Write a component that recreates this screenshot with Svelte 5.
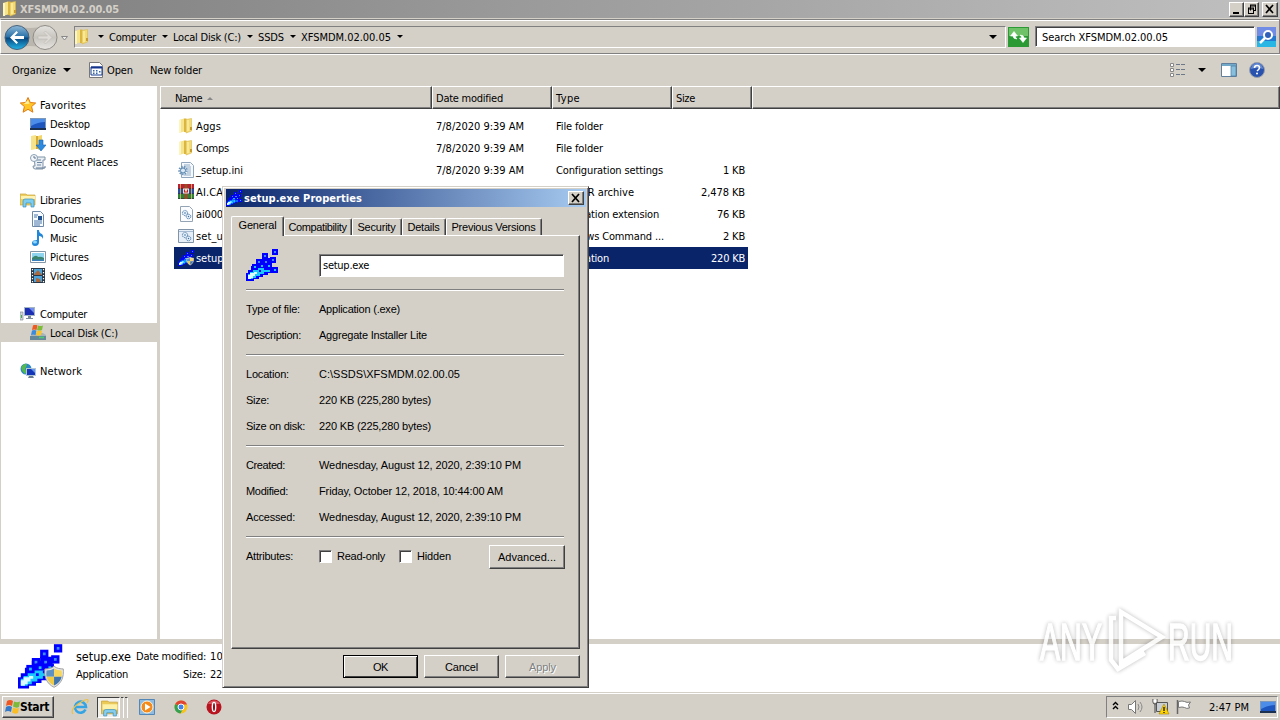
<script lang="ts">
  const crumbs = [
    { label: 'Computer', w: 47 },
    { label: 'Local Disk (C:)', w: 68 },
    { label: 'SSDS', w: 26 },
    { label: 'XFSMDM.02.00.05', w: 90 },
  ];

  const places = [
    { label: 'Favorites', w: 46, icon: 'star', root: true },
    { label: 'Desktop', w: 40, icon: 'desktop' },
    { label: 'Downloads', w: 53, icon: 'downloads' },
    { label: 'Recent Places', w: 68, icon: 'recent' },
    null,
    { label: 'Libraries', w: 41, icon: 'libraries', root: true },
    { label: 'Documents', w: 54, icon: 'document' },
    { label: 'Music', w: 27, icon: 'music' },
    { label: 'Pictures', w: 39, icon: 'pictures' },
    { label: 'Videos', w: 32, icon: 'videos' },
    null,
    { label: 'Computer', w: 47, icon: 'computer', root: true },
    { label: 'Local Disk (C:)', w: 68, icon: 'disk', current: true },
    null,
    { label: 'Network', w: 42, icon: 'network', root: true },
  ];

  const date = '7/8/2020 9:39 AM';
  const files = [
    { name: 'Aggs', nw: 25, icon: 'folder', type: 'File folder', tw: 47, size: '', sw: 0 },
    { name: 'Comps', nw: 33, icon: 'folder', type: 'File folder', tw: 47, size: '', sw: 0 },
    { name: '_setup.ini', nw: 47, icon: 'ini', type: 'Configuration settings', tw: 107, size: '1 KB', sw: 22 },
    { name: 'AI.CAB', nw: 34, icon: 'rar', type: 'WinRAR archive', tw: 78, size: '2,478 KB', sw: 44 },
    { name: 'ai000', nw: 27, icon: 'dll', type: 'Application extension', tw: 103, size: '76 KB', sw: 28 },
    { name: 'set_u', nw: 27, icon: 'cmd', type: 'Windows Command ...', tw: 108, size: '2 KB', sw: 22 },
    { name: 'setup.exe', nw: 48, icon: 'setupShield', type: 'Application', tw: 53, size: '220 KB', sw: 34, selected: true },
  ];

  const tabs = [
    { label: 'Compatibility', w: 58, box: 68 },
    { label: 'Security', w: 38, box: 50 },
    { label: 'Details', w: 32, box: 44 },
    { label: 'Previous Versions', w: 84, box: 96 },
  ];

  const groups = [
    [
      ['Type of file:', 54, 'Application (.exe)', 81],
      ['Description:', 55, 'Aggregate Installer Lite', 108],
    ],
    [
      ['Location:', 43, 'C:\\SSDS\\XFSMDM.02.00.05', 141],
      ['Size:', 23, '220 KB (225,280 bytes)', 112],
      ['Size on disk:', 59, '220 KB (225,280 bytes)', 112],
    ],
    [
      ['Created:', 39, 'Wednesday, August 12, 2020, 2:39:10 PM', 202],
      ['Modified:', 42, 'Friday, October 12, 2018, 10:44:00 AM', 184],
      ['Accessed:', 49, 'Wednesday, August 12, 2020, 2:39:10 PM', 202],
    ],
  ] as [string, number, string, number][][];

  // top left corners of the pixels that fly off the setup logo
  const bits = [[26, 0], [16, 4], [24, 8], [17, 10], [10, 10], [13, 14], [20, 14], [6, 15], [26, 18]];

  // Tracks the text out (or in) so that it takes exactly the given width
  function fit(node: HTMLElement, width: number) {
    const len = node.textContent?.length ?? 0;
    if (!width || !len) return;
    const extra = (width - node.getBoundingClientRect().width) / len;
    node.style.letterSpacing = `${extra}px`;
  }
</script>

{#snippet txt(label: string, w: number)}<span class="txt" use:fit={w}>{label}</span>{/snippet}

{#snippet logo()}
  <path d="M0 32v-8h2v-3h3v-4h5v-5h6V9h9v10h5v5h-8v2h-5v2h-4v2H8v2z" fill="#00f" />
  {#each bits as [x, y], i}
    <rect x={x + 1} y={y + 1} width="4" height="4" fill={i < 5 ? '#3f8cff' : '#20c4ff'} stroke="#00f" stroke-width="2" />
  {/each}
  <path d="M2 30v-5h2v-2h3v-2h5v-2h7v2h5v2h-6v2h-4v2h-4v2H7v1z" fill="#18c8ff" />
  <path d="M2 30v-4h2v-2h4v-1h3v2H9v2H7v2H5v1z" fill="#dcfbff" />
  <path d="M13 21h2v2h-2zM18 19h2v2h-2z" fill="#00f" />
{/snippet}

{#snippet shield()}
  <path d="M8 0c2 1.700 5 2 7 2 .5 6-1 11-7 14C2 13 .5 8 1 2c2 0 5-.3 7-2z" fill="#e8e8e8" stroke="#9a9a9a" stroke-width=".7" />
  <path d="M8 1.700V8H2.200Q1.900 5.500 2.200 3.200 6 3.200 8 1.700z" fill="#5c92c4" />
  <path d="M8 1.700V8h5.800q.3-2.500 0-4.800Q10 3.200 8 1.700z" fill="#f6d65c" />
  <path d="M8 8v6.700Q3.300 12.500 2.200 8z" fill="#efcb48" />
  <path d="M8 8v6.700q4.700-2.200 5.800-6.700z" fill="#3f74ad" />
{/snippet}

{#snippet icon(name: string)}
  <svg class="icon" width="16" height="16" viewBox="0 0 16 16">
    {#if name === 'folder'}
      <path d="M1 2l5-1.500v13L1 15z" fill="#f7e389" />
      <path d="M6 .5h2.500v13.500H6z" fill="#dcb53f" />
      <path d="M8 1.500L13.500.500v12.500L8 15z" fill="#f3da74" stroke="#d9b84a" stroke-width=".6" />
      <path d="M1 2v13h2V2zM9.500 2v11h1V2z" fill="#fdf5bf" />
      <path d="M12 9h2v3h-2z" fill="#c79b2f" />
    {:else if name === 'star'}
      <path d="M8 .5l2.300 5 5.400.5-4.100 3.600 1.300 5.600L8 12.300l-4.900 2.900 1.300-5.600L.3 6l5.400-.5z" fill="#ffc524" stroke="#e07a12" />
      <path d="M8 3l1.500 3.700L4 7z" fill="#fff1a0" />
    {:else if name === 'desktop'}
      <path d="M0 2h16v12H0z" fill="#7d98b8" />
      <path d="M1 3h14v9H1z" fill="#1e56c0" />
      <path d="M1 3h14v3Q8 6 1 10z" fill="#4b8de8" />
      <path d="M0 12h16v2H0z" fill="#1c3050" />
    {:else if name === 'downloads'}
      <path d="M1 1l5-1v14l-5 1z" fill="#f7e389" /><path d="M6 1h2v13H6z" fill="#d5aa35" />
      <path d="M8 1l4-1v13l-4 2z" fill="#f3d568" />
      <path d="M9 5h4v5h3l-5 6-5-6h3z" fill="#2c8be0" stroke="#1a63ae" stroke-width=".6" />
    {:else if name === 'recent'}
      <path d="M4 3h11v3h-2v9H5q-2 0-2-3h2z" fill="#e9eef3" stroke="#7e93a6" />
      <path d="M7 6h4M7 8.500h5M7 11h4" stroke="#6b87a5" />
      <circle cx="4" cy="4" r="3.500" fill="#f4f7fa" stroke="#8aa0b2" />
      <path d="M4 2v2h2M6 14h9v-2" fill="none" stroke="#5e7790" />
    {:else if name === 'libraries'}
      <path d="M0 2h6l1 1h8v10H0z" fill="#edcf63" stroke="#c9a43a" stroke-width=".7" />
      <path d="M1 4h14v3H1z" fill="#fff3b4" />
      <path d="M3 15V9q0-2 2-2h7q2 0 2 2v6h-3v-4H6v4z" fill="#7ccdf0" stroke="#3e91bd" stroke-width=".7" />
    {:else if name === 'document'}
      <path d="M2.500.5h8l3 3v12h-11z" fill="#f8fbff" stroke="#6e88a8" />
      <path d="M4 4h4M4 6h3M4 10h8M4 12h8M4 14h6" stroke="#4874a8" />
      <path d="M8 5h4v4H8z" fill="#22518f" />
    {:else if name === 'music'}
      <path d="M7 0h2q0 3 3 4 2 2 1 5-1-3-4-3v6q0 4-4 4-3 0-3-3t5-3z" fill="#2387d8" />
      <ellipse cx="5" cy="12" rx="2" ry="1.500" fill="#8fd6ff" />
    {:else if name === 'pictures'}
      <path d="M.5 2.500h15v11H.5z" fill="#fff" stroke="#8296a8" />
      <path d="M2 4h12v8H2z" fill="#8fd4ef" />
      <path d="M2 9q4-4 6-1 3-1 6 1v3H2z" fill="#3b856c" /><path d="M2 10.500h12V12H2z" fill="#3a80bd" />
    {:else if name === 'videos'}
      <path d="M1 0h14v15H1z" fill="#283848" />
      <path d="M4 1h8v6H4zM4 8h8v6H4z" fill="#4ea4d8" />
      <path d="M5 5l3-3 4 5H4zM6 10l4 1 1 3H6z" fill="#a9683e" />
      <path d="M2.500 1v14M13.500 1v14" stroke="#fff" stroke-width="1.200" stroke-dasharray="1.200 1.800" />
    {:else if name === 'computer'}
      <path d="M0 6h3v8H0z" fill="#cfd6da" stroke="#77858d" stroke-width=".6" /><path d="M1 9h1v3H1z" fill="#42ad45" />
      <path d="M4 1h11v9H4z" fill="#a4b5c6" /><path d="M5 2h9v7H5z" fill="#1c2fb2" /><path d="M9 2h5v5z" fill="#728ceb" />
      <path d="M8 10h3v2h2v1H6v-1h2z" fill="#7b8b98" />
    {:else if name === 'disk'}
      <path d="M1 10l2-2h10l3 2v5H0z" fill="#a7b5bb" /><path d="M0 11h16v4H0z" fill="#648799" /><path d="M9 12.500h5" stroke="#48d070" stroke-width="1.500" />
      <path d="M3 .500q2-1.500 4.500 0L6.500 5Q4 4 2 5z" fill="#ee5a21" /><path d="M8 .500q2.500 1 5 0L12 5q-2.500 1-5 0z" fill="#7cbc36" />
      <path d="M2 5.500q2-1 4.500 0L5.500 10Q3 9 1 10z" fill="#3b8bdc" /><path d="M7 5.500q2.500 1 5 0l-1 4.500q-2.500 1-5 0z" fill="#fbc52a" />
    {:else if name === 'network'}
      <circle cx="6" cy="6" r="5.500" fill="#2b87c8" /><path d="M2 3q4-4 5-1L5 6l2 3-2 2Q0 7 2 3z" fill="#54b84c" />
      <path d="M6 5h10v8H6z" fill="#b3c6d6" /><path d="M7 6h8v6H7z" fill="#1436b8" /><path d="M11 6h4v4z" fill="#6598ef" />
      <path d="M9 13h4l1 2H8z" fill="#6b7f91" />
    {:else if name === 'ini'}
      <path d="M3.500.5h9l3 3v12h-12z" fill="#f5f9fd" stroke="#90a6bc" />
      <path d="M6 3h6M6 5h7M9 7h4M10 9h3M9 11h4M6 13h7" stroke="#91acc5" />
      <circle cx="5" cy="8.500" r="3.500" fill="none" stroke="#6c93b8" stroke-width="2.500" stroke-dasharray="1.400 1" />
      <circle cx="5" cy="8.500" r="2.500" fill="#dce9f4" stroke="#5785b0" />
    {:else if name === 'rar'}
      <path d="M0 0h16v5H0z" fill="#b52232" /><path d="M0 5h16v5H0z" fill="#2a4d9b" /><path d="M0 10h16v5H0z" fill="#2e8037" />
      <path d="M0 4.500h16M0 9.500h16M0 14.500h16" stroke="#302740" stroke-width=".6" />
      <path d="M2.500 0v15M13.500 0v15" stroke="#e0bd68" stroke-width=".8" /><path d="M6.500 0h3v15h-3z" fill="#9b4c24" />
      <path d="M5 4.500h6v5H5z" fill="#f4eee0" /><path d="M6.500 5.500V8h3V5.500" fill="none" stroke="#b22" stroke-width="1.200" />
    {:else if name === 'dll' || name === 'cmd'}
      {#if name === 'dll'}
        <path d="M2.500.5h9l3 3v12h-12z" fill="#fafcff" stroke="#94a4b5" />
      {:else}
        <path d="M.5 1.500h15v13H.5z" fill="#e6eef7" stroke="#8193a7" /><path d="M1 3.500h14" stroke="#a7bcd2" />
      {/if}
      <circle cx="7" cy="7" r="2.600" fill="#e1edf8" stroke="#517da8" stroke-dasharray="1.300 .6" /><circle cx="7" cy="7" r=".8" fill="#416e9b" />
      <circle cx="10.500" cy="10.500" r="2.300" fill="#e1edf8" stroke="#517da8" stroke-dasharray="1.300 .6" /><circle cx="10.500" cy="10.500" r=".7" fill="#416e9b" />
    {:else if name === 'setup' || name === 'setupShield'}
      <g transform="scale(.5)">{@render logo()}</g>
      {#if name === 'setupShield'}
        <g transform="translate(8 7) scale(.52)">{@render shield()}</g>
      {/if}
    {:else if name === 'open'}
      <path d="M1.500.5h10l3 3v12h-13z" fill="#fff" stroke="#777" />
      <path d="M3 5h11v8H3z" fill="#fff" stroke="#123a8c" /><path d="M3 4.500h11v2H3z" fill="#17348c" />
      <path d="M5 8h1.500v1.500H5zM8 8h1.500v1.500H8zM11 9h1.500v1.500H11zM5 10.500h1.500V12H5zM8 10.500h1.500V12H8z" fill="#36a" />
    {/if}
  </svg>
{/snippet}

<div class="screen">
  <header class="titlebar">
    {@render icon('folder')}
    <b>{@render txt('XFSMDM.02.00.05', 99)}</b>
    <div class="caption">
      <i><svg width="14" height="13"><path d="M3 9h6v2H3z" /></svg></i>
      <i><svg width="14" height="13"><path d="M5.500 2v5.500M5 2h6M5 3h6M10.500 2v6M8 7.500h3M3 5h6M3 6h6M3.500 5v6M8.500 5v6M3 10.500h6" fill="none" stroke="#000" /></svg></i>
      <i class="x"><svg width="14" height="13"><path d="M3 2l7 8M10 2l-7 8" stroke="#000" stroke-width="1.700" /></svg></i>
    </div>
  </header>

  <div class="addressbar">
    <svg class="travel" width="70" height="30" viewBox="0 0 70 30">
      <defs>
        <linearGradient id="back" x2="0" y2="1">
          <stop offset="0" stop-color="#8fb9d8" /><stop offset=".48" stop-color="#2870a8" />
          <stop offset=".52" stop-color="#07457e" /><stop offset="1" stop-color="#23b5e8" />
        </linearGradient>
        <linearGradient id="fwd" x2="0" y2="1">
          <stop offset="0" stop-color="#e5e3df" /><stop offset=".5" stop-color="#c8c5bf" /><stop offset="1" stop-color="#e8e6e2" />
        </linearGradient>
      </defs>
      <path d="M15 4q15 4 30 0v22q-15-4-30 0z" fill="#bbb7af" />
      <circle cx="17" cy="15.500" r="12" fill="url(#back)" stroke="#47627a" />
      <path d="M10 15.500l6.500-6.500 1.500 1.500-3.500 3.500H24v3h-9.500l3.500 3.500-1.500 1.500z" fill="#fff" />
      <circle cx="45" cy="15.500" r="12" fill="url(#fwd)" stroke="#8f8c86" />
      <path d="M52 15.500L45.500 9 44 10.500l3.500 3.500H38v3h9.500L44 20.500l1.500 1.500z" fill="#dedbd6" stroke="#bbb8b1" stroke-width=".6" />
      <path d="M61.500 14.500h6L64.500 18z" fill="#eee" stroke="#888" />
    </svg>
    <div class="path">
      {@render icon('folder')}
      <s class="arrow first"></s>
      {#each crumbs as c}
        {@render txt(c.label, c.w)}<s class="arrow"></s>
      {/each}
      <s class="arrow big"></s>
    </div>
    <svg class="refresh" width="21" height="20"><path d="M0 0h21v20H0z" fill="#2b9a35" /><path d="M1 1h19v8H1z" fill="#6fc268" />
      <path d="M2.500 9L6 4.500 9.500 9H7.500q0 2 1.500 3-4 0-4-3zM18.500 11L15 15.500 11.500 11h2q0-2-1.500-3 4 0 4 3z" fill="#fff" stroke="#fff" stroke-width=".6" /></svg>
    <div class="search">{@render txt('Search XFSMDM.02.00.05', 126)}</div>
    <svg class="go" width="19" height="20"><path d="M0 0h19v20H0z" fill="#2379d0" /><path d="M0 0h19v9H0z" fill="#708ce4" /><path d="M0 14h19v6H0z" fill="#28b7e4" />
      <circle cx="11" cy="8" r="4" fill="#3060b8" stroke="#fff" stroke-width="2" /><path d="M8 11l-5 5" stroke="#fff" stroke-width="2.500" /></svg>
  </div>

  <div class="toolbar">
    {@render txt('Organize', 44)}<s class="arrow mid"></s>
    {@render icon('open')}{@render txt('Open', 26)}
    <div class="newfolder">{@render txt('New folder', 52)}</div>
    <svg class="views" width="96" height="16" viewBox="0 0 96 16">
      <path d="M.5 1.500h3v3h-3zM.5 6.500h3v3h-3zM.5 11.500h3v3h-3z" fill="#fff" stroke="#888" />
      <path d="M6 2.500h4M11 2.500h4M6 7.500h4M11 7.500h4M6 12.500h4M11 12.500h4" stroke="#6e7888" />
      <path d="M28 6h8l-4 4z" />
      <path d="M51.500 1.500h15v13h-15z" fill="#fff" stroke="#617f9c" /><path d="M52 2h14v2H52z" fill="#72a9c9" /><path d="M61 4h5v10h-5z" fill="#87bfdc" stroke="#477ca2" stroke-width=".7" />
      <circle cx="87" cy="8" r="7.500" fill="#2952ae" stroke="#999eaa" /><path d="M81 7a6 6 0 0 1 12 0q-6-2-12 0z" fill="#6287d2" />
      <path d="M84.500 6q0-2.500 2.500-2.500t2.500 2.200Q89.500 7 87 9" fill="none" stroke="#fff" stroke-width="1.600" /><circle cx="87" cy="11.500" r="1" fill="#fff" />
    </svg>
  </div>

  <div class="body">
    <nav>
      {#each places as p}
        <div class="place" class:root={p?.root} class:current={p?.current}>
          {#if p}{@render icon(p.icon)}{@render txt(p.label, p.w)}{/if}
        </div>
      {/each}
    </nav>
    <div class="list">
      <div class="head">
        <div class="c1">{@render txt('Name', 27)}<svg width="7" height="4"><path d="M0 4l3-3 3 3z" fill="#888" /></svg></div>
        <div class="c2">{@render txt('Date modified', 67)}</div>
        <div class="c2">{@render txt('Type', 24)}</div>
        <div class="c4">{@render txt('Size', 19)}</div>
        <div class="c5"></div>
      </div>
      <div class="rows">
        {#each files as f}
          <div class="row" class:selected={f.selected}>
            <div class="name">{@render icon(f.icon)}{@render txt(f.name, f.nw)}</div>
            <div class="date">{@render txt(date, 88)}</div>
            <div class="type">{@render txt(f.type, f.tw)}</div>
            <div class="size">{@render txt(f.size, f.sw)}</div>
          </div>
        {/each}
      </div>
    </div>
  </div>

  <footer class="details">
    <svg width="47" height="46" viewBox="0 0 34 33">
      {@render logo()}
      <g transform="translate(18.500 16) scale(.95)">{@render shield()}</g>
    </svg>
    <div class="what">
      <span class="title">{@render txt('setup.exe', 55)}</span>
      {@render txt('Application', 52)}
    </div>
    <div class="keys">
      {@render txt('Date modified:', 70)}
      {@render txt('Size:', 23)}
    </div>
    <div class="vals">
      {@render txt('10/12/2018', 59)}
      {@render txt('220 KB', 34)}
    </div>
  </footer>

  <div class="taskbar">
    <div class="start">
      <svg width="17" height="16" viewBox="0 0 17 16">
        <path d="M3 2q3-2 6 0L8 7Q5 5 2 7z" fill="#ee5722" /><path d="M10 2.500q3 1.500 6 0L15 8q-3 1.500-6-.5z" fill="#7cb83a" />
        <path d="M2 8q3-2 6 0l-1 5q-3-2-6 0z" fill="#3478c8" /><path d="M9 8.500Q12 10 15 9l-1 5q-3 1.500-6-.5z" fill="#f9bd25" />
      </svg>
      <b>{@render txt('Start', 29)}</b>
    </div>
    <svg class="ie" width="18" height="18" viewBox="0 0 18 18">
      <path d="M14.500 11.500A5.500 5.500 0 1 1 15 9H5" fill="none" stroke="#35a4e4" stroke-width="2.600" />
      <path d="M2 16Q-1 12 7 6q9-6 10-4 .5 1-1 3" fill="none" stroke="#ecc246" stroke-width="1.200" />
    </svg>
    <div class="running">
      <div>
        <svg width="18" height="17" viewBox="0 0 16 16">
          <path d="M0 1h6l1 1h8v11H0z" fill="#ecca58" stroke="#c6a13a" stroke-width=".7" /><path d="M1 4h14v5H1z" fill="#fdf1a9" />
          <path d="M2 15v-4q0-2 2-2h8q2 0 2 2v4h-3v-3H5v3z" fill="#86cef0" stroke="#4593bb" stroke-width=".7" />
        </svg>
      </div>
      <u></u><u></u>
    </div>
    <svg class="wmp" width="16" height="16"><path d="M.5.5h15v15H.5z" fill="#8dbbe2" stroke="#5287b8" /><circle cx="8" cy="8" r="6" fill="#f58a1c" stroke="#fff2d8" /><path d="M6 4.500v7L11.500 8z" fill="#fff" /></svg>
    <svg class="chrome" width="14" height="14" viewBox="0 0 14 14">
      <circle cx="7" cy="7" r="6.500" fill="#f8c31e" /><path d="M7 7L1.200 4A6.500 6.500 0 0 1 13 4.500H7z" fill="#df4532" /><path d="M7 7L1.200 4A6.500 6.500 0 0 0 6.500 13.500L9 9z" fill="#36a052" />
      <circle cx="7" cy="7" r="3" fill="#4283e8" stroke="#fff" />
    </svg>
    <svg class="opera" width="16" height="16"><circle cx="8" cy="8" r="7.500" fill="#b81420" /><path d="M2 5a7 7 0 0 1 12 0z" fill="#d85660" /><ellipse cx="8" cy="8" rx="2.400" ry="5.200" fill="#fff" /><ellipse cx="8" cy="8" rx="1" ry="4" fill="#8b0d16" /></svg>
    <div class="tray">
      <svg width="84" height="18" viewBox="0 0 84 18">
        <path d="M7 8l2.500-2.500L12 8M7 12l2.500-2.500L12 12" transform="translate(-1 -1)" fill="none" stroke="#000" stroke-width="1.400" />
        <path d="M21.500 6.500h3l4-4v13l-4-4h-3z" fill="#fff" stroke="#777" /><path d="M31 6q2 3 0 6M33 4q4 5 0 10" fill="none" stroke="#888" />
        <path d="M49.500 4.500h11v9h-11z" fill="#c8ced4" stroke="#555" /><path d="M46 1v3q0 2 2 2t2-2V1M48 6v9" fill="none" stroke="#444" /><path d="M46.500 1.500h3v3h-3z" fill="#fff" />
        <path d="M57 6l5 10H52z" fill="#ffd500" stroke="#a58100" stroke-width=".6" /><path d="M57 9v4M57 14v1" stroke="#000" stroke-width="1.200" />
        <path d="M70.500 2v14" stroke="#666" stroke-width="1.500" /><path d="M71.500 3.500q4-1 6 0 2 1.500 6 .5l-2 3 1 3q-3 1-5-.5-2-1-6 0z" fill="#fff" stroke="#777" />
      </svg>
      <span class="clock">{@render txt('2:47 PM', 40)}</span>
      {@render icon('desktop')}
    </div>
  </div>

  <div class="dialog">
    <div class="dtitle">
      {@render icon('setup')}
      <b>{@render txt('setup.exe Properties', 118)}</b>
      <i class="x"><svg width="14" height="12"><path d="M3 2l7 8M10 2l-7 8" stroke="#000" stroke-width="1.700" /></svg></i>
    </div>
    <div class="tabs">
      <div class="tab active">{@render txt('General', 38)}</div>
      {#each tabs as t}
        <div class="tab" style:width="{t.box}px">{@render txt(t.label, t.w)}</div>
      {/each}
    </div>
    <div class="panel">
      <div class="filename">
        <svg width="33" height="33" viewBox="0 0 33 33">{@render logo()}</svg>
        <div class="field">{@render txt('setup.exe', 46)}</div>
      </div>
      {#each groups as g}
        <hr />
        {#each g as [key, kw, value, vw]}
          <div class="prop">
            <div class="key">{@render txt(key, kw)}</div>
            {@render txt(value, vw)}
          </div>
        {/each}
      {/each}
      <hr />
      <div class="prop attrs">
        <div class="key">{@render txt('Attributes:', 47)}</div>
        <em class="check"></em>{@render txt('Read-only', 48)}
        <em class="check second"></em>{@render txt('Hidden', 34)}
        <div class="btn advanced">{@render txt('Advanced...', 58)}</div>
      </div>
    </div>
    <div class="buttons">
      <div class="btn default">{@render txt('OK', 15)}</div>
      <div class="btn">{@render txt('Cancel', 33)}</div>
      <div class="btn disabled">{@render txt('Apply', 27)}</div>
    </div>
  </div>

  <svg class="watermark" width="210" height="76" viewBox="0 0 210 76">
    <g fill="#fff" stroke="#fff" stroke-width="1.500" font-family="Liberation Sans" font-size="51">
      <text x="5" y="55" textLength="62" lengthAdjust="spacingAndGlyphs">ANY</text>
      <text x="133" y="55" textLength="65" lengthAdjust="spacingAndGlyphs">RUN</text>
    </g>
    <path d="M86 7l41 25-41 26zM81 13h-5v42l7 9 27-16" fill="none" stroke="#fff" stroke-width="4.500" />
  </svg>
</div>

<style>
  :global(body) {
    margin: 0;
    overflow: hidden;
  }

  .screen {
    position: relative;
    width: 1280px;
    height: 720px;
    overflow: hidden;
    display: flex;
    flex-direction: column;
    background: #d4d0c8;
    color: #000;
    font: 11px/14px "DejaVu Sans Condensed", "DejaVu Sans", sans-serif;
  }

  .txt {
    white-space: pre;
    flex: none;
    padding-top: 2px;
  }

  svg {
    display: block;
    flex: none;
  }

  i, b {
    font-style: normal;
    display: flex;
  }

  .titlebar {
    height: 18px;
    flex: none;
    display: flex;
    align-items: center;
    padding-left: 2px;
    gap: 2px;
    background: linear-gradient(90deg, #808080, #c0c0c0);
    color: #d4d0c8;
  }

  .caption {
    margin-left: auto;
    display: flex;
    padding-right: 2px;
  }

  .caption i, .dtitle i {
    width: 14px;
    height: 12px;
    background: #d4d0c8;
    border: 1px solid;
    border-color: #fff #404040 #404040 #fff;
    box-shadow: inset -1px -1px #808080;
  }

  .caption i {
    width: 13px;
    height: 13px;
  }

  .caption .x {
    width: 14px;
    margin-left: 3px;
  }

  .addressbar {
    height: 33px;
    flex: none;
    display: flex;
    align-items: center;
    margin-top: 1px;
    border: 1px solid #808080;
    border-left-color: #fff;
    box-shadow: inset 0 1px #fff, 0 1px #fff;
    box-sizing: content-box;
  }

  .travel {
    margin-left: -1px;
  }

  .path {
    width: 930px;
    height: 20px;
    margin-left: 4px;
    display: flex;
    align-items: center;
    border: 1px solid;
    border-color: #808080 #fff #fff #808080;
    box-sizing: content-box;
  }

  .path .icon {
    margin-left: -1px;
  }

  .arrow {
    width: 0;
    flex: none;
    border: 3px solid transparent;
    border-top-color: #000;
    border-bottom: 0;
    margin: 0 5px 0 6px;
  }

  .arrow.first {
    margin-left: 8px;
  }

  .arrow.big {
    margin-left: auto;
    margin-right: 8px;
    border-width: 4px 4px 0;
  }

  .arrow.mid {
    border-width: 4px 4px 0;
    margin: 0 17px 0 7px;
  }

  .refresh {
    margin-left: 2px;
  }

  .search {
    width: 212px;
    height: 19px;
    margin-left: 6px;
    padding-left: 6px;
    display: flex;
    align-items: center;
    background: #fff;
    border: 1px solid;
    border-color: #808080 #fff #fff #808080;
    box-shadow: inset 1px 1px #404040;
  }

  .go {
    margin-left: 2px;
  }

  .toolbar {
    height: 32px;
    flex: none;
    display: flex;
    align-items: center;
    padding-left: 12px;
  }

  .toolbar .icon {
    margin-right: 3px;
  }

  .newfolder {
    margin-left: 17px;
    display: flex;
  }

  .views {
    margin-left: auto;
    margin-right: 14px;
  }

  .body {
    height: 553px;
    flex: none;
    display: flex;
  }

  nav {
    width: 156px;
    padding-top: 9px;
    margin-left: 1px;
    border-right: 3px solid #d4d0c8;
    background: #fff;
  }

  .place {
    height: 19px;
    display: flex;
    align-items: center;
    gap: 4px;
    padding-left: 29px;
  }

  .place.root {
    padding-left: 19px;
  }

  .place.current {
    background: #d4d0c8;
  }

  .list {
    flex: 1;
    background: #fff;
  }

  .head {
    height: 23px;
    display: flex;
    background: #d4d0c8;
    box-sizing: border-box;
  }

  .head div {
    box-sizing: border-box;
    display: flex;
    align-items: center;
    padding-left: 3px;
    border: 1px solid;
    border-color: #fff #404040 #404040 #fff;
    box-shadow: inset -1px -1px #808080;
  }

  .head .c1 {
    width: 272px;
    padding-left: 14px;
    gap: 5px;
  }

  .head .c2 {
    width: 120px;
  }

  .head .c4 {
    width: 80px;
  }

  .head .c5 {
    flex: 1;
  }

  .rows {
    width: 574px;
    margin: 6px 0 0 14px;
  }

  .row {
    height: 22px;
    display: flex;
    align-items: center;
  }

  .row.selected {
    background: #0a246a;
    color: #fff;
  }

  .name {
    width: 258px;
    padding-left: 4px;
    align-items: center;
    gap: 2px;
  }

  .name .icon {
    margin-top: -1px;
  }

  .name, .date, .type, .size {
    display: flex;
    flex: none;
  }

  .date {
    width: 120px;
  }

  .type {
    width: 115px;
  }

  .size {
    width: 74px;
    justify-content: flex-end;
  }

  .details {
    height: 48px;
    flex: none;
    display: flex;
    background: #fff;
    border-top: 5px solid #d4d0c8;
    padding-left: 18px;
  }

  .what, .keys, .vals {
    display: flex;
    flex-direction: column;
    padding-top: 4px;
    gap: 2px;
  }

  .what {
    width: 55px;
    margin-left: 11px;
    align-items: flex-start;
  }

  .title {
    font-size: 12.500px;
    display: flex;
  }

  .keys {
    width: 75px;
    align-items: flex-end;
  }

  .vals {
    margin-left: 4px;
    align-items: flex-start;
  }

  .taskbar {
    flex: 1;
    margin-top: 1px;
    border-top: 1px solid #fff;
    display: flex;
    align-items: center;
    padding-left: 2px;
  }

  .start {
    width: 49px;
    height: 20px;
    padding-left: 1px;
    display: flex;
    align-items: center;
    font-size: 12px;
    border: 1px solid;
    border-color: #fff #404040 #404040 #fff;
    box-shadow: inset -1px -1px #808080;
  }

  .start .txt {
    padding-top: 0;
    margin-left: -1px;
  }

  .ie {
    margin-left: 17px;
  }

  .running {
    display: flex;
    height: 21px;
    margin-left: 8px;
  }

  .running div {
    width: 23px;
    padding: 2px 0 0 3px;
    background: #f2f0ec;
    border: 1px solid;
    border-color: #404040 #fff #fff #404040;
    box-sizing: border-box;
  }

  .running u {
    width: 2px;
    border-top: 1px solid #404040;
    border-right: 1px solid #fff;
    margin-left: 1px;
  }

  .wmp {
    margin-left: 11px;
  }

  .chrome {
    margin-left: 19px;
  }

  .opera {
    margin-left: 18px;
  }

  .tray {
    width: 170px;
    height: 20px;
    margin: 0 2px 0 auto;
    display: flex;
    align-items: center;
    border: 1px solid;
    border-color: #808080 #fff #fff #808080;
  }

  .clock {
    margin: 0 11px 0 18px;
    display: flex;
  }

  .dialog {
    position: absolute;
    left: 222px;
    top: 186px;
    width: 367px;
    height: 502px;
    box-sizing: border-box;
    background: #d4d0c8;
    border: 1px solid;
    border-color: #d4d0c8 #404040 #404040 #d4d0c8;
    box-shadow: inset 1px 1px #fff, inset -1px -1px #808080;
    padding: 2px 2px 0 3px;
    font: 11px/14px "Liberation Sans", Arial, sans-serif;
  }

  .dialog .txt {
    padding-top: 0;
  }

  .dialog .dtitle .txt {
    padding-top: 2px;
  }

  .dtitle {
    height: 18px;
    display: flex;
    align-items: center;
    gap: 2px;
    color: #fff;
    font: 11px/14px "DejaVu Sans Condensed", sans-serif;
    background: linear-gradient(90deg, #0a246a, #a6caf0);
  }

  b {
    font-weight: bold;
  }

  .dtitle .x {
    margin: 0 2px 0 auto;
  }

  .tabs {
    display: flex;
    align-items: flex-end;
    margin: 9px 0 -1px 5px;
    height: 20px;
    position: relative;
  }

  .tab {
    height: 17px;
    box-sizing: border-box;
    display: flex;
    align-items: center;
    justify-content: center;
    padding-right: 1px;
    border: 1px solid;
    border-color: #fff #404040 transparent #fff;
    border-bottom: 0;
    border-radius: 2px 2px 0 0;
    box-shadow: inset -1px 0 #808080;
    margin-bottom: 1px;
  }

  .tab.active {
    width: 53px;
    height: 20px;
    margin-bottom: 0;
    padding: 0 0 3px;
    background: #d4d0c8;
  }

  .panel {
    width: 349px;
    height: 414px;
    margin-left: 5px;
    box-sizing: border-box;
    padding-left: 14px;
    border: 1px solid;
    border-color: #fff #404040 #404040 #fff;
    box-shadow: inset -1px -1px #808080;
  }

  .filename {
    height: 47px;
    display: flex;
    align-items: center;
    padding-top: 11px;
    box-sizing: border-box;
  }

  .field {
    width: 240px;
    height: 21px;
    margin: 1px 0 0 40px;
    padding-left: 3px;
    display: flex;
    align-items: center;
    background: #fff;
    border: 1px solid;
    border-color: #808080 #fff #fff #808080;
    box-shadow: inset 1px 1px #404040;
    font: 11px/14px "DejaVu Sans Condensed", sans-serif;
  }

  hr {
    width: 318px;
    height: 0;
    margin: 6px 0 5px;
    border: 0;
    border-top: 1px solid #808080;
    border-bottom: 1px solid #fff;
  }

  .prop {
    height: 26px;
    display: flex;
    align-items: center;
  }

  .key {
    width: 73px;
    display: flex;
  }

  .check {
    width: 11px;
    height: 11px;
    margin-right: 5px;
    background: #fff;
    border: 1px solid;
    border-color: #808080 #fff #fff #808080;
    box-shadow: inset 1px 1px #404040;
  }

  .check.second {
    margin-left: 14px;
  }

  .btn {
    width: 75px;
    height: 23px;
    box-sizing: border-box;
    display: flex;
    align-items: center;
    justify-content: center;
    border: 1px solid;
    border-color: #fff #404040 #404040 #fff;
    box-shadow: inset -1px -1px #808080;
  }

  .btn.advanced {
    height: 24px;
    margin: 1px 0 0 38px;
    width: 76px;
  }

  .btn.default {
    border-color: #000;
    box-shadow: inset 1px 1px #fff, inset -1px -1px #404040;
  }

  .btn.disabled {
    color: #808080;
    text-shadow: 1px 1px #fff;
  }

  .buttons {
    display: flex;
    gap: 6px;
    margin: 6px 0 0 117px;
  }

  .watermark {
    position: absolute;
    left: 1035px;
    top: 605px;
    opacity: .85;
    filter: drop-shadow(0 0 2px rgba(0, 0, 0, .32));
  }
</style>
